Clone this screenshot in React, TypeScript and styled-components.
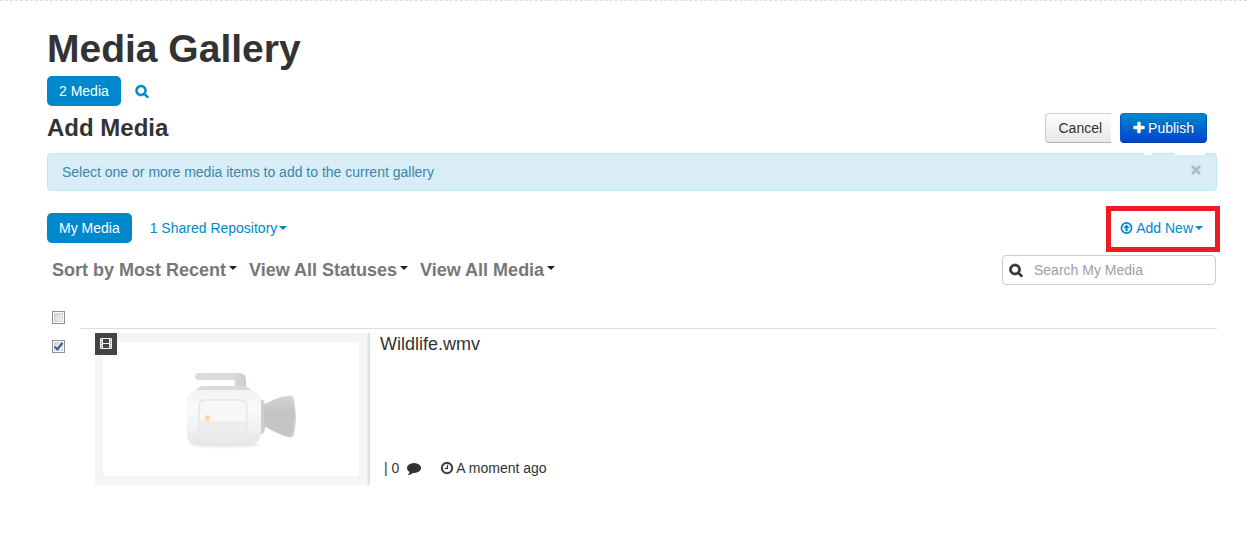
import React from "react";
import styled, { createGlobalStyle } from "styled-components";

const GlobalStyle = createGlobalStyle`
  *, *::before, *::after { box-sizing: border-box; }
  body {
    margin: 0;
    background: #fff;
    color: #333;
    font: 14px/20px "Liberation Sans", Arial, sans-serif;
  }
  button, input { font: inherit; color: inherit; }
`;

const Page = styled.main`
  border-top: 1px dashed #ddd;
  padding: 28px 30px 50px 47px;
`;

const Title = styled.h1`
  margin: 0 0 7px;
  font-size: 39px;
  line-height: 40px;
`;

const SubTitle = styled.h2`
  margin: 0;
  font-size: 24px;
  line-height: 30px;
`;

const Row = styled.div<{ $top?: number; $gap?: number; $inset?: boolean }>`
  display: flex;
  align-items: center;
  gap: ${(p) => p.$gap ?? 0}px;
  margin-top: ${(p) => p.$top ?? 0}px;
  padding-left: ${(p) => (p.$inset ? 5 : 0)}px;
  padding-right: ${(p) => (p.$inset ? 1 : 0)}px;
`;

const Push = styled.div`
  display: flex;
  margin-left: auto;
`;

const Pill = styled.button<{ $active?: boolean }>`
  display: flex;
  align-items: center;
  height: 30px;
  padding: 0 12px;
  border: 0;
  border-radius: 5px;
  background: ${(p) => (p.$active ? "#08c" : "transparent")};
  color: ${(p) => (p.$active ? "#fff" : "#08c")};
  cursor: pointer;
`;

const Tool = styled(Pill)`
  padding: 0 14px;
`;

const Tab = styled(Pill)`
  padding: 0 18px;
`;

const Caret = styled.span<{ $dark?: boolean }>`
  border: 4px solid transparent;
  border-top-color: ${(p) => (p.$dark ? "#222" : "currentColor")};
  border-bottom: 0;
  margin-left: ${(p) => (p.$dark ? 3 : 2)}px;
  margin-bottom: ${(p) => (p.$dark ? 4 : 0)}px;
`;

const Button = styled.button<{ $primary?: boolean }>`
  display: flex;
  align-items: center;
  gap: 3px;
  height: 30px;
  padding: 0 12px;
  border: 1px solid;
  cursor: pointer;
  ${(p) =>
    p.$primary
      ? `
    border-color: #0074cc #05c #003ca6;
    border-radius: 4px;
    background: linear-gradient(#08c, #04c);
    color: #fff;
    text-shadow: 0 -1px 0 rgba(0, 0, 0, 0.25);
    padding: 0 12px 0 11px;
    gap: 2px;
    margin-right: 10px;`
      : `
    border-color: #ccc #ccc #b3b3b3;
    border-right: 0;
    border-radius: 4px 0 0 4px;
    background: linear-gradient(#fff, #e6e6e6);
    color: #333;
    padding-right: 9px;
    margin-right: 9px;`}
`;

const Alert = styled.div`
  position: relative;
  display: flex;
  justify-content: space-between;
  margin-top: 10px;
  padding: 8px 14px;
  border: 1px solid #bce8f1;
  border-radius: 4px;
  background: #d9edf7;
  color: #3a87ad;
  &::before {
    content: "";
    position: absolute;
    top: -1px;
    right: 11px;
    width: 61px;
    height: 2px;
    background: linear-gradient(90deg, #fff 8px, transparent 8px 31px, #fff 31px);
  }
`;

const Close = styled.button`
  display: flex;
  align-items: center;
  height: 16px;
  padding: 0;
  border: 0;
  background: none;
  color: #adbdc5;
  cursor: pointer;
`;

const AddNew = styled.div`
  position: relative;
  &::after {
    content: "";
    position: absolute;
    inset: -7px -3px -9px auto;
    width: 114px;
    border: 5px solid #ed1c24;
    pointer-events: none;
  }
`;

const AddButton = styled(Pill)`
  padding: 0 14px 0 16px;
  svg { margin-right: 3px; }
`;

const Filter = styled.button`
  display: flex;
  align-items: center;
  padding: 0;
  border: 0;
  background: none;
  color: #777;
  font-size: 18px;
  font-weight: bold;
  white-space: nowrap;
  cursor: pointer;
`;

const Search = styled.label`
  display: flex;
  align-items: center;
  gap: 11px;
  width: 214px;
  height: 30px;
  margin-left: auto;
  padding: 0 6px;
  border: 1px solid #ccc;
  border-radius: 4px;
  input {
    flex: 1;
    min-width: 0;
    padding: 0;
    border: 0;
    outline: 0;
    background: none;
  }
  input::placeholder { color: #a0a0a0; opacity: 1; }
`;

const Check = styled.input`
  appearance: none;
  flex: none;
  width: 13px;
  height: 13px;
  margin: 0;
  border: 1px solid #8e8f8f;
  box-shadow: inset 0 0 0 1px #fff, inset 0 0 0 2px #d0d3d6;
  background: linear-gradient(135deg, #cdd1d6, #f8f8f8);
  &:checked::after {
    content: "";
    display: block;
    width: 5px;
    height: 9px;
    margin: 0 0 0 3px;
    border: solid #3c4f9a;
    border-width: 0 2px 2px 0;
    transform: rotate(38deg);
  }
`;

const List = styled.section`
  display: grid;
  grid-template-columns: 28px 1fr;
  margin-top: 26px;
  padding-left: 5px;
`;

const Rule = styled.div`
  height: 18px;
  border-bottom: 1px solid #ddd;
`;

const CheckCell = styled.div`
  padding-top: 11px;
  line-height: 0;
`;

const HeadCell = styled.div`
  line-height: 0;
`;

const Item = styled.article`
  display: flex;
  padding: 4px 0 0 15px;
`;

const Thumb = styled.div`
  position: relative;
  width: 275px;
  height: 152px;
  flex: none;
  border: solid #f5f5f5;
  border-width: 9px 11px 9px 8px;
  background: #fff;
  box-shadow: inset 0 0 1px #eee;
  &::after {
    content: "";
    position: absolute;
    inset: -9px -11px -9px auto;
    width: 3px;
    background: linear-gradient(90deg, #f0f0f0, #d8d8d8);
  }
`;

const Badge = styled.span`
  position: absolute;
  top: -9px;
  left: -8px;
  display: flex;
  align-items: center;
  justify-content: center;
  width: 22px;
  height: 22px;
  background: #444;
  color: #fff;
`;

const Details = styled.div`
  display: flex;
  flex-direction: column;
  justify-content: space-between;
  padding: 1px 0 7px 10px;
`;

const Name = styled.h3`
  margin: 0;
  font-size: 18px;
  line-height: 20px;
  font-weight: normal;
`;

const Meta = styled.div`
  display: flex;
  align-items: center;
  padding-left: 4px;
`;

const MetaPart = styled.span<{ $gap: number }>`
  display: flex;
  align-items: center;
  gap: ${(p) => p.$gap}px;
  margin-right: 19px;
`;

const paths = {
  search:
    "M1216 832q0-185-131.5-316.5t-316.5-131.5-316.5 131.5-131.5 316.5 131.5 316.5 316.5 131.5 316.5-131.5 131.5-316.5zm512 832q0 52-38 90t-90 38q-54 0-90-38l-343-342q-179 124-399 124-143 0-273.5-55.5t-225-150-150-225-55.5-273.5 55.5-273.5 150-225 225-150 273.5-55.5 273.5 55.5 225 150 150 225 55.5 273.5q0 220-124 399l343 343q37 37 37 90z",
  plus: "M1600 736v192q0 40-28 68t-68 28h-416v416q0 40-28 68t-68 28h-192q-40 0-68-28t-28-68v-416h-416q-40 0-68-28t-28-68v-192q0-40 28-68t68-28h416v-416q0-40 28-68t68-28h192q40 0 68 28t28 68v416h416q40 0 68 28t28 68z",
  clock:
    "M1024 544v448q0 14-9 23t-23 9h-320q-14 0-23-9t-9-23v-64q0-14 9-23t23-9h224v-352q0-14 9-23t23-9h64q14 0 23 9t9 23zm416 352q0-148-73-273t-198-198-273-73-273 73-198 198-73 273 73 273 198 198 273 73 273-73 198-198 73-273zm224 0q0 209-103 385.5t-279.5 279.5-385.5 103-385.5-103-279.5-279.5-103-385.5 103-385.5 279.5-279.5 385.5-103 385.5 103 279.5 279.5 103 385.5z",
  comment:
    "M1792 896q0 174-120 321.5t-326 233-450 85.5q-70 0-145-8-198 175-460 242-49 14-114 22-17 2-30.5-9t-17.5-29v-1q-3-4-.5-12t2-10 4.5-9.5l6-9 7-8.5 8-9q7-8 31-34.5t34.5-38 31-39.5 32.5-51 27-59 26-76q-157-89-247.5-220t-90.5-281q0-130 71-248.5t191-204.5 286-136.5 348-50.5q244 0 450 85.5t326 233 120 321.5z",
};

function Icon({ name, bold = 0 }: { name: keyof typeof paths; bold?: number }) {
  return (
    <svg width="14" height="14" viewBox="0 0 1792 1792" fill="currentColor" stroke="currentColor" strokeWidth={bold} aria-hidden="true">
      <path d={paths[name]} />
    </svg>
  );
}

function UploadIcon() {
  return (
    <svg width="13" height="14" viewBox="0 0 13 14" fill="none" aria-hidden="true">
      <circle cx="6.5" cy="7" r="5.1" stroke="currentColor" strokeWidth="1.7" />
      <path d="M6.5 3.6 9.8 7H7.6v3.2H5.4V7H3.2z" fill="currentColor" />
    </svg>
  );
}

function FilmIcon() {
  return (
    <svg width="14" height="12" viewBox="0 0 14 12" aria-hidden="true">
      <rect x="1" y="0" width="12" height="11" rx="1" fill="#f4f4f4" />
      <path d="M4 1h6v4H4zM4 6h6v4H4z" fill="#444" />
      <path d="M2 1h1v1H2zM2 3h1v1H2zM2 5h1v1H2zM2 7h1v1H2zM2 9h1v1H2zM11 1h1v1h-1zM11 3h1v1h-1zM11 5h1v1h-1zM11 7h1v1h-1zM11 9h1v1h-1z" fill="#777" />
    </svg>
  );
}

const CameraArt = styled.svg`
  position: absolute;
  left: 79px;
  top: 26px;
`;

function Camera() {
  return (
    <CameraArt width="120" height="85" viewBox="0 0 120 85" aria-hidden="true">
      <defs>
        <linearGradient id="body" x1="0" y1="0" x2="0" y2="1">
          <stop offset="0" stopColor="#f3f3f3" />
          <stop offset="0.35" stopColor="#fafafa" />
          <stop offset="0.7" stopColor="#f1f1f1" />
          <stop offset="1" stopColor="#e6e6e6" />
        </linearGradient>
        <linearGradient id="handle" x1="0" y1="0" x2="1" y2="0">
          <stop offset="0" stopColor="#dcdddd" />
          <stop offset="0.75" stopColor="#d9dbdc" />
          <stop offset="1" stopColor="#c9cccc" />
        </linearGradient>
        <linearGradient id="lens" x1="0" y1="0" x2="0" y2="1">
          <stop offset="0" stopColor="#d4d4d4" />
          <stop offset="0.4" stopColor="#c4c4c4" />
          <stop offset="1" stopColor="#c6c6c6" />
        </linearGradient>
        <filter id="soft" x="-10%" y="-200%" width="120%" height="500%">
          <feGaussianBlur stdDeviation="1" />
        </filter>
      </defs>
      <ellipse cx="43" cy="77" rx="34" ry="2" fill="#e3e3e3" filter="url(#soft)" />
      <path d="M16 5h40q8 0 8 7v8H53v-6q0-2-2-2H17q-4 0-4-3 0-4 3-4z" fill="url(#handle)" />
      <path d="M14 23q2-5 8-5h38q7 0 9 5z" fill="#d8d9d9" />
      <path d="M77 31q6 0 6 6v23q0 6-6 7z" fill="#cecece" />
      <path d="M82 37q10-7 23-9 4-1 6 1 5 19 1 37-1 4-6 3-13-4-24-11z" fill="url(#lens)" />
      <path d="M107 28q4-1 5 3 3 17 0 34-1 4-5 4 4-2 4-6 3-14 0-30-1-4-4-5z" fill="#d7d7d7" />
      <path d="M18 22h47q14 0 14 13v28q0 14-13 14H15Q5 77 5 67V34q0-12 13-12z" fill="url(#body)" />
      <rect x="17" y="32" width="48" height="35" rx="6" fill="#f7f7f7" stroke="#e6e6e6" strokeWidth="1.4" />
      <path d="M18 53h46v8q0 5-5 5H23q-5 0-5-5z" fill="#ededed" />
      <circle cx="25.500" cy="50" r="2.800" fill="#ffd7a3" />
    </CameraArt>
  );
}

export default function App() {
  return (
    <>
      <GlobalStyle />
      <Page>
        <Title>Media Gallery</Title>
        <Row>
          <Pill $active>2 Media</Pill>
          <Tool aria-label="Search gallery">
            <Icon name="search" bold={70} />
          </Tool>
        </Row>
        <Row $top={7}>
          <SubTitle>Add Media</SubTitle>
          <Push>
            <Button>Cancel</Button>
            <Button $primary>
              <Icon name="plus" bold={60} />
              Publish
            </Button>
          </Push>
        </Row>
        <Alert role="status">
          Select one or more media items to add to the current gallery
          <Close aria-label="Dismiss">
            <svg width="12" height="12" viewBox="0 0 12 12" aria-hidden="true">
              <path d="M2 2l8 8M10 2l-8 8" stroke="currentColor" strokeWidth="3" />
            </svg>
          </Close>
        </Alert>
        <Row $top={22}>
          <Pill $active>My Media</Pill>
          <Tab>
            1 Shared Repository
            <Caret />
          </Tab>
          <Push>
            <AddNew>
              <AddButton>
                <UploadIcon />
                Add New
                <Caret />
              </AddButton>
            </AddNew>
          </Push>
        </Row>
        <Row $top={12} $gap={12} $inset>
          <Filter>
            Sort by Most Recent
            <Caret $dark />
          </Filter>
          <Filter>
            View All Statuses
            <Caret $dark />
          </Filter>
          <Filter>
            View All Media
            <Caret $dark />
          </Filter>
          <Search>
            <Icon name="search" bold={90} />
            <input type="text" placeholder="Search My Media" aria-label="Search My Media" />
          </Search>
        </Row>
        <List>
          <HeadCell>
            <Check type="checkbox" aria-label="Select all" />
          </HeadCell>
          <Rule />
          <CheckCell>
            <Check type="checkbox" defaultChecked aria-label="Select Wildlife.wmv" />
          </CheckCell>
          <Item>
            <Thumb>
              <Camera />
              <Badge>
                <FilmIcon />
              </Badge>
            </Thumb>
            <Details>
              <Name>Wildlife.wmv</Name>
              <Meta>
                <MetaPart $gap={8}>
                  | 0 <Icon name="comment" />
                </MetaPart>
                <MetaPart $gap={2}>
                  <Icon name="clock" bold={30} />A moment ago
                </MetaPart>
              </Meta>
            </Details>
          </Item>
        </List>
      </Page>
    </>
  );
}
